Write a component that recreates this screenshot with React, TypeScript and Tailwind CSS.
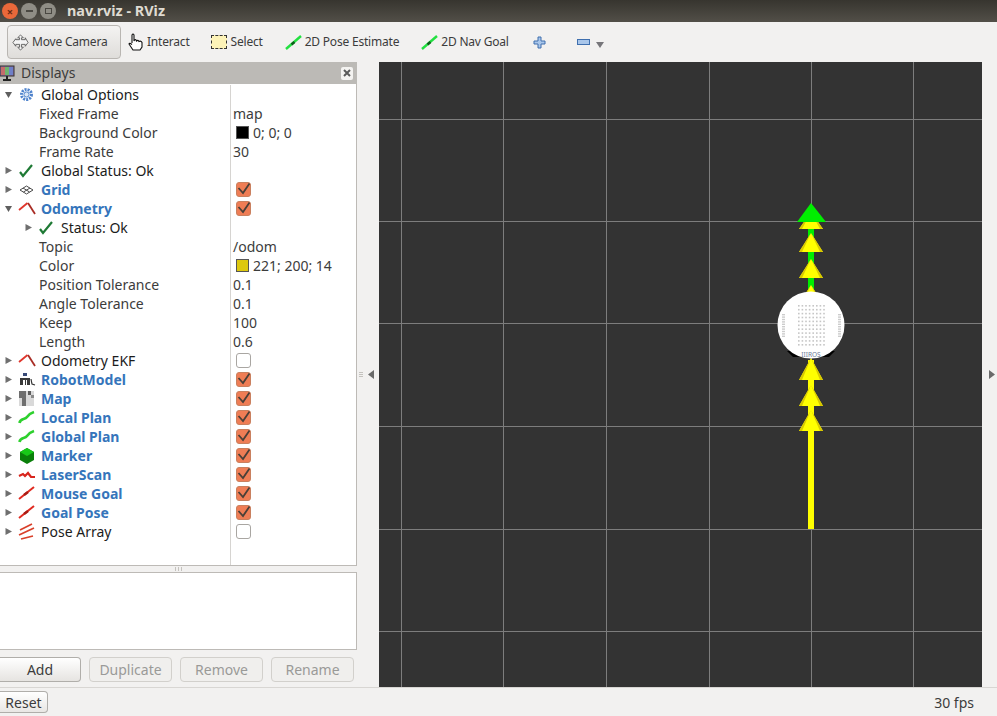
import React from 'react';

const font = { fontFamily: '"Noto Sans", sans-serif' };

function Tri({ open }: { open?: boolean }) {
  return (
    <svg width="9" height="9" viewBox="0 0 9 9" className="shrink-0">
      {open ? <path d="M1 2 L8 2 L4.5 8 Z" fill="#5f5f5f" /> : <path d="M1.5 1 L8 4.5 L1.5 8 Z" fill="#6f6f6f" />}
    </svg>
  );
}

function Check({ on }: { on: boolean }) {
  return (
    <svg width="15" height="15" viewBox="0 0 15 15" className="shrink-0">
      <rect x="0.5" y="0.5" width="14" height="14" rx="2.5" fill={on ? '#ef7d55' : '#ffffff'} stroke={on ? '#c9805f' : '#a9a6a2'} />
      {on && <path d="M2.5 6 L7 11 L13.5 1.5" fill="none" stroke="#4a4038" strokeWidth="1.8" />}
    </svg>
  );
}

const I = ({ children }: { children: React.ReactNode }) => (
  <svg width="18" height="18" viewBox="0 0 18 18" className="shrink-0">{children}</svg>
);

const icons: Record<string, React.ReactNode> = {
  gear: (
    <I>
      <circle cx="8.5" cy="8.5" r="5" fill="none" stroke="#4f83cc" strokeWidth="3" strokeDasharray="2 1" />
      <circle cx="8.5" cy="8.5" r="2.6" fill="#dbe7f6" stroke="#4f83cc" />
    </I>
  ),
  check: <I><path d="M2 10 L5 14 L14 3" fill="none" stroke="#1f7a35" strokeWidth="2.2" /></I>,
  grid: (
    <I>
      <path d="M2 9 L8.5 5 L15 9 L8.5 13 Z M5 7 L11.5 11 M12 7 L5.5 11" fill="none" stroke="#4b4b4b" strokeWidth="1" />
    </I>
  ),
  odom: (
    <I>
      <path d="M1 10 L9.5 3" fill="none" stroke="#e0352b" strokeWidth="1.8" />
      <path d="M10 3 L17 14" fill="none" stroke="#a82c24" strokeWidth="1.8" />
    </I>
  ),
  robot: (
    <I>
      <rect x="5" y="2" width="4" height="3" fill="#384a78" />
      <rect x="2" y="7" width="10" height="7" fill="#3a3a3a" />
      <rect x="5" y="9" width="2" height="5" fill="#ffffff" />
      <rect x="8" y="9" width="1" height="5" fill="#ffffff" />
      <path d="M13 8 L14 13 L17 14" fill="none" stroke="#333" strokeWidth="1.2" />
    </I>
  ),
  map: (
    <I>
      <rect x="1" y="1" width="15" height="15" fill="#d9d9d9" />
      <rect x="1" y="1" width="7" height="7" fill="#6e6e6e" />
      <rect x="4" y="8" width="4" height="8" fill="#6e6e6e" />
      <rect x="10" y="1" width="3" height="4" fill="#5c5c5c" />
      <rect x="13" y="5" width="3" height="3" fill="#8a8a8a" />
    </I>
  ),
  plan: <I><path d="M1.5 14 C2 9 7 11 9 8 C11 5 13 4 16 3" fill="none" stroke="#2ed02e" strokeWidth="2.6" /></I>,
  marker: (
    <I>
      <path d="M9 1 L16 5 L16 13 L9 17 L2 13 L2 5 Z" fill="#0a7f0a" />
      <path d="M9 1 L16 5 L9 9 L2 5 Z" fill="#18c918" />
    </I>
  ),
  laser: <I><path d="M1 10 L5 8 L7 10 L10 7 L13 11 L17 11" fill="none" stroke="#d8251d" strokeWidth="2.2" /></I>,
  goal: (
    <I>
      <path d="M1 14 L16 2" stroke="#e02a20" strokeWidth="2" />
      <path d="M6 10 L10 7" stroke="#a81c14" strokeWidth="2.6" />
    </I>
  ),
  array: (
    <I>
      <path d="M2 7 L14 1 M1 12 L16 5 M3 16 L15 13" stroke="#d9402a" strokeWidth="1.7" />
    </I>
  ),
};

type Row = {
  kind: 'top' | 'prop' | 'status';
  label: string;
  icon?: string;
  bold?: boolean;
  open?: boolean;
  value?: string;
  swatch?: string;
  check?: boolean;
};

const rows: Row[] = [
  { kind: 'top', label: 'Global Options', icon: 'gear', open: true },
  { kind: 'prop', label: 'Fixed Frame', value: 'map' },
  { kind: 'prop', label: 'Background Color', value: '0; 0; 0', swatch: '#000000' },
  { kind: 'prop', label: 'Frame Rate', value: '30' },
  { kind: 'top', label: 'Global Status: Ok', icon: 'check' },
  { kind: 'top', label: 'Grid', icon: 'grid', bold: true, check: true },
  { kind: 'top', label: 'Odometry', icon: 'odom', bold: true, open: true, check: true },
  { kind: 'status', label: 'Status: Ok', icon: 'check' },
  { kind: 'prop', label: 'Topic', value: '/odom' },
  { kind: 'prop', label: 'Color', value: '221; 200; 14', swatch: '#ddc80e' },
  { kind: 'prop', label: 'Position Tolerance', value: '0.1' },
  { kind: 'prop', label: 'Angle Tolerance', value: '0.1' },
  { kind: 'prop', label: 'Keep', value: '100' },
  { kind: 'prop', label: 'Length', value: '0.6' },
  { kind: 'top', label: 'Odometry EKF', icon: 'odom', check: false },
  { kind: 'top', label: 'RobotModel', icon: 'robot', bold: true, check: true },
  { kind: 'top', label: 'Map', icon: 'map', bold: true, check: true },
  { kind: 'top', label: 'Local Plan', icon: 'plan', bold: true, check: true },
  { kind: 'top', label: 'Global Plan', icon: 'plan', bold: true, check: true },
  { kind: 'top', label: 'Marker', icon: 'marker', bold: true, check: true },
  { kind: 'top', label: 'LaserScan', icon: 'laser', bold: true, check: true },
  { kind: 'top', label: 'Mouse Goal', icon: 'goal', bold: true, check: true },
  { kind: 'top', label: 'Goal Pose', icon: 'goal', bold: true, check: true },
  { kind: 'top', label: 'Pose Array', icon: 'array', check: false },
];

function TreeRow({ r }: { r: Row }) {
  return (
    <div className="flex h-[19px] items-center text-[14px] leading-[19px]">
      <div className="flex h-full w-[230px] shrink-0 items-center">
        {r.kind === 'prop' ? (
          <span className="pl-[39px] text-[#3c3c3c]">{r.label}</span>
        ) : (
          <div className={r.kind === 'status' ? 'flex items-center pl-[24px]' : 'flex items-center pl-[4px]'}>
            <Tri open={r.open} />
            <div className="ml-[5px] flex">{icons[r.icon as string]}</div>
            <span className={r.bold ? 'ml-[5px] font-bold text-[#3575bb]' : 'ml-[5px] text-[#1c1c1c]'}>{r.label}</span>
          </div>
        )}
      </div>
      <div className="flex h-full flex-1 items-center border-l border-[#d6d4d1] pl-[2px] text-[#3c3c3c]">
        {r.swatch && <span className="mr-[4px] ml-[3px] h-[13px] w-[13px] border border-[#555]" style={{ backgroundColor: r.swatch }} />}
        {r.value}
        {r.check !== undefined && <span className="-mt-[1px] ml-[3px] flex"><Check on={r.check} /></span>}
      </div>
    </div>
  );
}

function Tool({ icon, label, className }: { icon: React.ReactNode; label: string; className: string }) {
  return (
    <div className={`flex items-center text-[12px] tracking-[-0.2px] text-[#3c3c3c] ${className}`}>
      {icon}
      <span>{label}</span>
    </div>
  );
}

const poseIcon = (
  <svg width="17" height="15" viewBox="0 0 17 15" className="mr-[3px]">
    <path d="M1 14 L16 1" stroke="#22e040" strokeWidth="2.4" />
    <path d="M6.5 9.5 L9.5 7" stroke="#0d5b1a" strokeWidth="2.4" />
  </svg>
);

function Viewport() {
  const vs = [401, 503, 606, 709, 811, 913];
  const hs = [119, 221, 323, 426, 529, 631];
  const dots: React.ReactNode[] = [];
  for (let i = 0; i < 8; i++)
    for (let j = 0; j < 11; j++)
      dots.push(<rect key={`${i}-${j}`} x={798 + i * 3.6} y={305 + j * 3.9} width="1.6" height="1.6" fill="#c6c6c6" />);
  for (let j = 0; j < 10; j++) {
    dots.push(<rect key={`l${j}`} x={782} y={314 + j * 2.4} width="3" height="1.4" fill="#cccccc" />);
    dots.push(<rect key={`r${j}`} x={838} y={314 + j * 2.4} width="3" height="1.4" fill="#cccccc" />);
  }
  const head = (apex: number, base: number) => (
    <g key={apex}>
      <path d={`M811 ${apex} L799 ${base} L823 ${base} Z`} fill="#ffff00" />
      <path d={`M811 ${apex} L799 ${base} L802 ${base} Z`} fill="#d8c800" />
      <path d={`M811 ${apex} L823 ${base} L820 ${base} Z`} fill="#d8c800" />
    </g>
  );
  return (
    <svg width="603" height="625" viewBox="379 62 603 625" className="block shrink-0">
      <rect x="379" y="62" width="603" height="625" fill="#333333" />
      {vs.map((x) => <line key={x} x1={x + 0.5} x2={x + 0.5} y1="62" y2="687" stroke="#7d7d7d" />)}
      {hs.map((y) => <line key={y} y1={y + 0.5} y2={y + 0.5} x1="379" x2="982" stroke="#7d7d7d" />)}
      <rect x="808" y="225" width="6" height="72" fill="#00ee00" />
      <rect x="808" y="360" width="6" height="169" fill="#ffff00" />
      {head(212, 229)}
      {head(233, 252)}
      {head(259, 278)}
      {head(285, 304)}
      {head(358, 380)}
      {head(385, 406)}
      {head(410, 431)}
      <path d="M797 222 L811 203 L826 222 Z" fill="#00ee00" />
      <path d="M787 351 L835 351 L829 357 L793 357 Z" fill="#000000" />
      <circle cx="811" cy="325" r="33.5" fill="#ffffff" />
      {dots}
      <text x="811" y="357" textAnchor="middle" fontSize="6.5" fill="#6b7a99" style={font}>IIIROS</text>
    </svg>
  );
}

export default function App() {
  return (
    <div className="flex h-[716px] w-[997px] flex-col overflow-hidden bg-[#f2f1f0]" style={font}>
      {/* title bar */}
      <div className="flex h-[22px] shrink-0 items-center bg-gradient-to-b from-[#37352f] to-[#524f48] pl-[2px]">
        <span className="flex h-[16px] w-[16px] items-center justify-center rounded-full bg-[#e9683a] text-[11px] leading-none font-bold text-[#6b2a12]">×</span>
        <span className="ml-[3px] flex h-[16px] w-[16px] items-center justify-center rounded-full bg-[#8f8d85]"><span className="h-[2px] w-[7px] bg-[#4a4842]" /></span>
        <span className="ml-[3px] flex h-[16px] w-[16px] items-center justify-center rounded-full bg-[#8f8d85]"><span className="h-[6px] w-[7px] border border-[#4a4842]" /></span>
        <span className="ml-[11px] text-[14.4px] font-bold text-[#dfdbd2]">nav.rviz - RViz</span>
      </div>

      {/* toolbar */}
      <div className="flex h-[40px] shrink-0 items-center">
        <div className="ml-[7px] flex h-[34px] w-[114px] items-center rounded-[4px] border border-[#b9b6b2] bg-gradient-to-b from-[#f4f3f2] to-[#dfddda] pl-[4px] text-[12px] tracking-[-0.2px] text-[#3c3c3c]">
          <svg width="17" height="17" viewBox="0 0 18 18" className="mr-[3px]">
            <path d="M9 1 L12 4 L10 4 L10 6 L14 6 L14 4 L17 9 L14 13 L14 11 L10 11 L10 14 L12 14 L9 17 L6 14 L8 14 L8 11 L4 11 L4 13 L1 9 L4 5 L4 6 L8 6 L8 4 L6 4 Z" fill="#f4f4f4" stroke="#555" strokeWidth="0.9" />
          </svg>
          Move Camera
        </div>
        <Tool
          className="ml-[6px]"
          label="Interact"
          icon={
            <svg width="18" height="20" viewBox="0 0 18 20" className="mr-[2px]">
              <path d="M5 11 L5 3 Q6 1 7 3 L7 9 L7.5 8 Q9 7 9.5 9 Q11 7.5 12 9.5 Q14 8.5 15 10.5 L15 15 L13 18 L6 18 L2 12 Q2.5 10.5 5 12.5" fill="#ffffff" stroke="#111" strokeWidth="1.1" />
            </svg>
          }
        />
        <Tool
          className="ml-[21px]"
          label="Select"
          icon={<span className="mr-[4px] h-[14px] w-[16px] border border-dashed border-[#333] bg-[#fdf3b8]" />}
        />
        <Tool className="ml-[22px]" label="2D Pose Estimate" icon={poseIcon} />
        <Tool className="ml-[22px]" label="2D Nav Goal" icon={poseIcon} />
        <svg width="13" height="13" viewBox="0 0 13 13" className="ml-[24px]">
          <path d="M5 1 H8 V5 H12 V8 H8 V12 H5 V8 H1 V5 H5 Z" fill="#a9c6ea" stroke="#3f6fae" />
        </svg>
        <svg width="13" height="6" viewBox="0 0 13 6" className="ml-[31px]">
          <rect x="0.5" y="0.5" width="12" height="5" fill="#a9c6ea" stroke="#3f6fae" />
        </svg>
        <svg width="8" height="6" viewBox="0 0 8 6" className="ml-[6px] mt-[5px]">
          <path d="M0 0 H8 L4 6 Z" fill="#77767a" />
        </svg>
      </div>

      {/* main */}
      <div className="flex h-[625px] shrink-0">
        <div className="flex w-[357px] shrink-0 flex-col">
          <div className="flex h-[22px] shrink-0 items-center justify-between bg-[#bcbab6] pr-[4px]">
            <div className="flex items-center pb-[1px]">
              <svg width="16" height="16" viewBox="1 0 16 16">
                <rect x="1" y="1" width="14" height="10" fill="#8a6f9e" stroke="#333" />
                <rect x="2" y="2" width="4" height="8" fill="#c46b6b" />
                <rect x="6" y="2" width="4" height="8" fill="#6fb36f" />
                <rect x="10" y="2" width="4" height="8" fill="#6f7fc8" />
                <path d="M8 11 V14 M4 15 H12" stroke="#222" strokeWidth="2" />
              </svg>
              <span className="ml-[5px] text-[14px] text-[#3c3c3c]">Displays</span>
            </div>
            <span className="flex h-[13px] w-[12px] items-center justify-center rounded-[2px] bg-[#f4f3f1]">
              <svg width="8" height="8" viewBox="0 0 8 8"><path d="M1 1 L7 7 M7 1 L1 7" stroke="#5a5a5a" strokeWidth="2" /></svg>
            </span>
          </div>
          <div className="flex h-[482px] flex-col border-r border-b border-[#bdbab6] bg-white pt-[1px]">
            {rows.map((r) => <TreeRow key={r.label + r.kind} r={r} />)}
            <div className="flex flex-1">
              <div className="w-[230px] shrink-0" />
              <div className="border-l border-[#d6d4d1]" />
            </div>
          </div>
          <div className="flex h-[6px] shrink-0 items-center justify-center gap-[2px]">
            <span className="h-[4px] w-px bg-[#c4c2be]" />
            <span className="h-[4px] w-px bg-[#c4c2be]" />
            <span className="h-[4px] w-px bg-[#c4c2be]" />
          </div>
          <div className="h-[78px] shrink-0 border-y border-r border-[#bdbab6] bg-white" />
          <div className="mt-[7px] flex gap-[8px] text-[14px]">
            <div className="flex h-[25px] w-[81px] items-center justify-center rounded-r-[4px] border border-l-0 border-[#b0aeaa] bg-gradient-to-b from-white to-[#e6e4e1] text-[#3c3c3c]">Add</div>
            <div className="flex h-[25px] w-[83px] items-center justify-center rounded-[4px] border border-[#d2d0cc] bg-[#f0efed] text-[#9a9a98]">Duplicate</div>
            <div className="flex h-[25px] w-[83px] items-center justify-center rounded-[4px] border border-[#d2d0cc] bg-[#f0efed] text-[#9a9a98]">Remove</div>
            <div className="flex h-[25px] w-[83px] items-center justify-center rounded-[4px] border border-[#d2d0cc] bg-[#f0efed] text-[#9a9a98]">Rename</div>
          </div>
        </div>
        <div className="flex w-[22px] shrink-0 items-center">
          <div className="ml-[2px] flex w-[5px] flex-col gap-[1px]">
            <span className="h-px w-[4px] bg-[#c4c2be]" />
            <span className="h-px w-[4px] bg-[#c4c2be]" />
            <span className="h-px w-[4px] bg-[#c4c2be]" />
          </div>
          <svg width="7" height="9" viewBox="0 0 7 9" className="ml-[4px]"><path d="M6 0 V9 L0 4.5 Z" fill="#6a6a6a" /></svg>
        </div>
        <Viewport />
        <div className="flex flex-1 items-center justify-end pr-[2px]">
          <svg width="7" height="9" viewBox="0 0 7 9"><path d="M1 0 V9 L7 4.5 Z" fill="#6a6a6a" /></svg>
        </div>
      </div>

      {/* status bar */}
      <div className="flex flex-1 items-center justify-between border-t border-[#d8d6d3] pr-[23px] text-[14px] text-[#3c3c3c]">
        <div className="flex h-[22px] w-[48px] items-center justify-center rounded-r-[4px] border border-l-0 border-[#b0aeaa] bg-gradient-to-b from-white to-[#e9e7e4]">Reset</div>
        <span>30 fps</span>
      </div>
    </div>
  );
}
